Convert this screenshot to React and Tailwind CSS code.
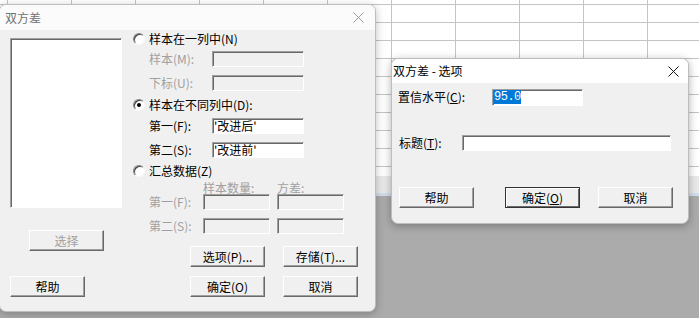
import React from 'react'

const sunken = 'border border-t-[#a0a0a0] border-l-[#a0a0a0] border-b-white border-r-white shadow-[inset_1px_1px_0_#696969]'

function Btn({ children, disabled, focus, className = '' }) {
  const edge = focus
    ? 'border border-[#333333] shadow-[inset_1px_1px_0_#ffffff,inset_-1px_-1px_0_#696969]'
    : 'border border-t-white border-l-white border-b-[#696969] border-r-[#696969] shadow-[inset_-1px_-1px_0_#a0a0a0]'
  return (
    <div className={`w-[75px] h-[21px] flex items-center justify-center bg-[#f0f0f0] text-[12px] leading-none ${edge} ${disabled ? 'text-[#a0a0a0]' : 'text-black'} ${className}`}>
      {children}
    </div>
  )
}

function Field({ w, h = 16, disabled, children }) {
  return (
    <div
      className={`${sunken} ${disabled ? 'bg-[#f0f0f0]' : 'bg-white'} flex items-center pl-[1px] text-[12px] leading-none text-black`}
      style={{ width: w, height: h }}
    >
      {children}
    </div>
  )
}

function Radio({ checked }) {
  return (
    <span className="w-[12px] h-[12px] rounded-full bg-white border border-t-[#808080] border-l-[#808080] border-b-[#f8f8f8] border-r-[#f8f8f8] shadow-[inset_1px_1px_0_#404040] flex items-center justify-center">
      {checked && <span className="w-[4px] h-[4px] rounded-full bg-black" />}
    </span>
  )
}

function CloseX({ color }) {
  return (
    <svg width="11" height="11" viewBox="0 0 11 11">
      <path d="M0.5 0.5 L10.5 10.5 M10.5 0.5 L0.5 10.5" stroke={color} strokeWidth="1" />
    </svg>
  )
}

function MainDialog() {
  return (
    <div className="absolute left-[-1px] top-[4px] w-[377px] h-[308px] rounded-[7px] border border-[#bdbdbd] bg-[#f0f0f0] overflow-hidden shadow-[0_2px_8px_rgba(0,0,0,0.25)]">
      {/* 标题栏 */}
      <div className="h-[25px] bg-[#fbfbfb] flex items-center justify-between pl-[5px] pr-[11px]">
        <span className="text-[12px] leading-none text-[#707070]">双方差</span>
        <CloseX color="#9a9a9a" />
      </div>

      <div className="flex flex-col pl-[10px]">
        <div className="flex">
          {/* 变量列表 */}
          <div className="w-[112px] pt-[8px] flex flex-col items-center">
            <div className={`w-[112px] h-[170px] bg-white ${sunken}`} />
            <Btn disabled className="mt-[22px] ml-[1px]">选择</Btn>
          </div>

          <div className="ml-[10px] flex flex-col text-[12px] leading-none">
            <div className="h-[18px] flex items-center pl-[1px] gap-[4px]">
              <Radio />
              <span>样本在一列中(N)</span>
            </div>
            <div className="mt-[2px] h-[18px] flex items-center pl-[17px] text-[#a0a0a0]">
              <span className="w-[63px]">样本(M):</span>
              <Field w={92} disabled />
            </div>
            <div className="mt-[6px] h-[18px] flex items-center pl-[17px] text-[#a0a0a0]">
              <span className="w-[63px]">下标(U):</span>
              <Field w={92} disabled />
            </div>
            <div className="mt-[4px] h-[18px] flex items-center pl-[1px] gap-[4px]">
              <Radio checked />
              <span>样本在不同列中(D):</span>
            </div>
            <div className="mt-[3px] h-[18px] flex items-center pl-[17px]">
              <span className="w-[63px]">第一(F):</span>
              <Field w={92}>'改进后'</Field>
            </div>
            <div className="mt-[6px] h-[18px] flex items-center pl-[17px]">
              <span className="w-[63px]">第二(S):</span>
              <Field w={92}>'改进前'</Field>
            </div>
            <div className="mt-[3px] h-[18px] flex items-center pl-[1px] gap-[4px]">
              <Radio />
              <span>汇总数据(Z)</span>
            </div>
            <div className="mt-[2px] h-[12px] flex items-center pl-[71px] text-[#a0a0a0]">
              <span className="w-[74px]">样本数量:</span>
              <span>方差:</span>
            </div>
            <div className="h-[16px] flex items-center pl-[17px] text-[#a0a0a0]">
              <span className="w-[54px]">第一(F):</span>
              <Field w={67} disabled />
              <div className="ml-[7px]"><Field w={67} disabled /></div>
            </div>
            <div className="mt-[8px] h-[16px] flex items-center pl-[17px] text-[#a0a0a0]">
              <span className="w-[54px]">第二(S):</span>
              <Field w={67} disabled />
              <div className="ml-[7px]"><Field w={67} disabled /></div>
            </div>
            <div className="mt-[12px] flex pl-[58px]">
              <Btn>选项(P)...</Btn>
              <Btn className="ml-[18px]">存储(T)...</Btn>
            </div>
          </div>
        </div>

        <div className="mt-[9px] flex">
          <Btn>帮助</Btn>
          <Btn className="ml-[105px]">确定(O)</Btn>
          <Btn className="ml-[18px]">取消</Btn>
        </div>
      </div>
    </div>
  )
}

function OptionsDialog() {
  return (
    <div className="absolute left-[391px] top-[58px] w-[298px] h-[166px] rounded-[7px] border border-[#bdbdbd] bg-[#f0f0f0] overflow-hidden shadow-[0_2px_8px_rgba(0,0,0,0.3)]">
      <div className="h-[24px] bg-white flex items-center justify-between pl-[1px] pr-[9px]">
        <span className="text-[12px] leading-none text-black">双方差 - 选项</span>
        <CloseX color="#111111" />
      </div>

      <div className="flex flex-col text-[12px] leading-none">
        <div className="mt-[5px] h-[18px] flex items-center pl-[6px]">
          <span className="w-[94px]">置信水平(<u>C</u>):</span>
          <Field w={91} h={17}>
            <span className="bg-[#0078d7] text-white py-[1px] font-['Liberation_Mono',monospace] tracking-[-0.5px]">95.0</span>
          </Field>
        </div>
        <div className="mt-[28px] h-[18px] flex items-center pl-[7px]">
          <span className="w-[63px]">标题(<u>T</u>):</span>
          <Field w={209} />
        </div>
        <div className="mt-[35px] flex pl-[7px]">
          <Btn className="w-[74px]">帮助</Btn>
          <Btn focus className="ml-[31px]">确定(<u>O</u>)</Btn>
          <Btn className="ml-[18px]">取消</Btn>
        </div>
      </div>
    </div>
  )
}

export default function App() {
  return (
    <div className="relative w-[699px] h-[318px] overflow-hidden bg-[#ababab] font-['Noto_Sans_CJK_SC',sans-serif] text-black">
      {/* 工作表背景 */}
      <div className="h-[176px] bg-white bg-[linear-gradient(to_right,#c4c4c4_1px,transparent_1px),linear-gradient(to_bottom,#c4c4c4_1px,transparent_1px)] bg-size-[64px_18px] bg-position-[7px_4px]" />
      <div className="h-[17px] bg-[#e9e9e9]" />
      <div className="h-[3px] bg-[#d2deec]" />

      <MainDialog />
      <OptionsDialog />
    </div>
  )
}
